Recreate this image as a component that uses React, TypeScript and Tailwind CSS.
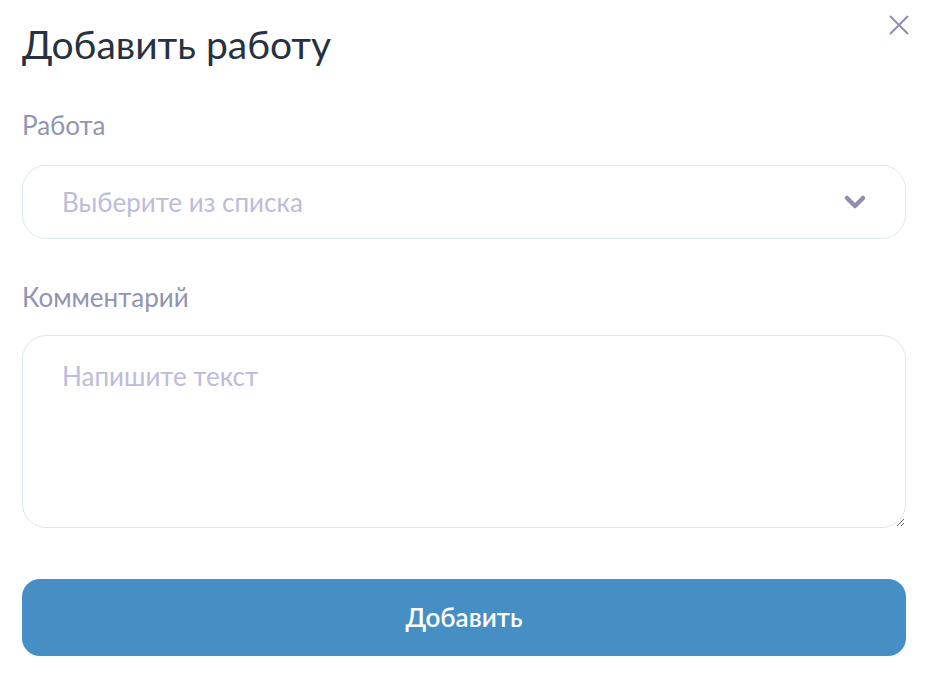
export default function App() {
  return (
    <div className="w-[928px] h-[680px] bg-white font-['Lato',sans-serif] relative px-[22px] pt-[20px]">
      <button className="absolute right-[18px] top-[14px] w-[22px] h-[22px] flex items-center justify-center text-[#8f90b0]">
        <svg width="20" height="20" viewBox="0 0 20 20" fill="none" stroke="currentColor" strokeWidth="2">
          <path d="M1 1L19 19M19 1L1 19" />
        </svg>
      </button>

      <h1 className="text-[39px] leading-[48px] text-[#263240]">Добавить работу</h1>

      <div className="mt-[42px] text-[26px] leading-[30px] text-[#9394b4]">Работа</div>
      <div className="mt-[25px] h-[74px] rounded-[24px] border border-[#dbe9ee] flex items-center pl-[39px] pr-[38px]">
        <span className="flex-1 text-[26px] text-[#bcbcdb]">Выберите из списка</span>
        <svg width="24" height="18" viewBox="0 0 24 18" fill="none" stroke="#8e8fb0" strokeWidth="4.5" strokeLinecap="round" strokeLinejoin="round">
          <path d="M4 5L12 13L20 5" />
        </svg>
      </div>

      <div className="mt-[43px] text-[26px] leading-[30px] text-[#9394b4]">Комментарий</div>
      <textarea
        placeholder="Напишите текст"
        className="mt-[23px] block w-full h-[193px] rounded-[24px] border border-[#dbe9ee] px-[39px] pt-[24px] text-[26px] leading-[32px] text-[#263240] placeholder:text-[#bcbcdb] outline-none"
      />

      <button className="mt-[51px] w-full h-[77px] rounded-[18px] bg-[#458fc4] text-white text-[26px] font-semibold">
        Добавить
      </button>
    </div>
  );
}
